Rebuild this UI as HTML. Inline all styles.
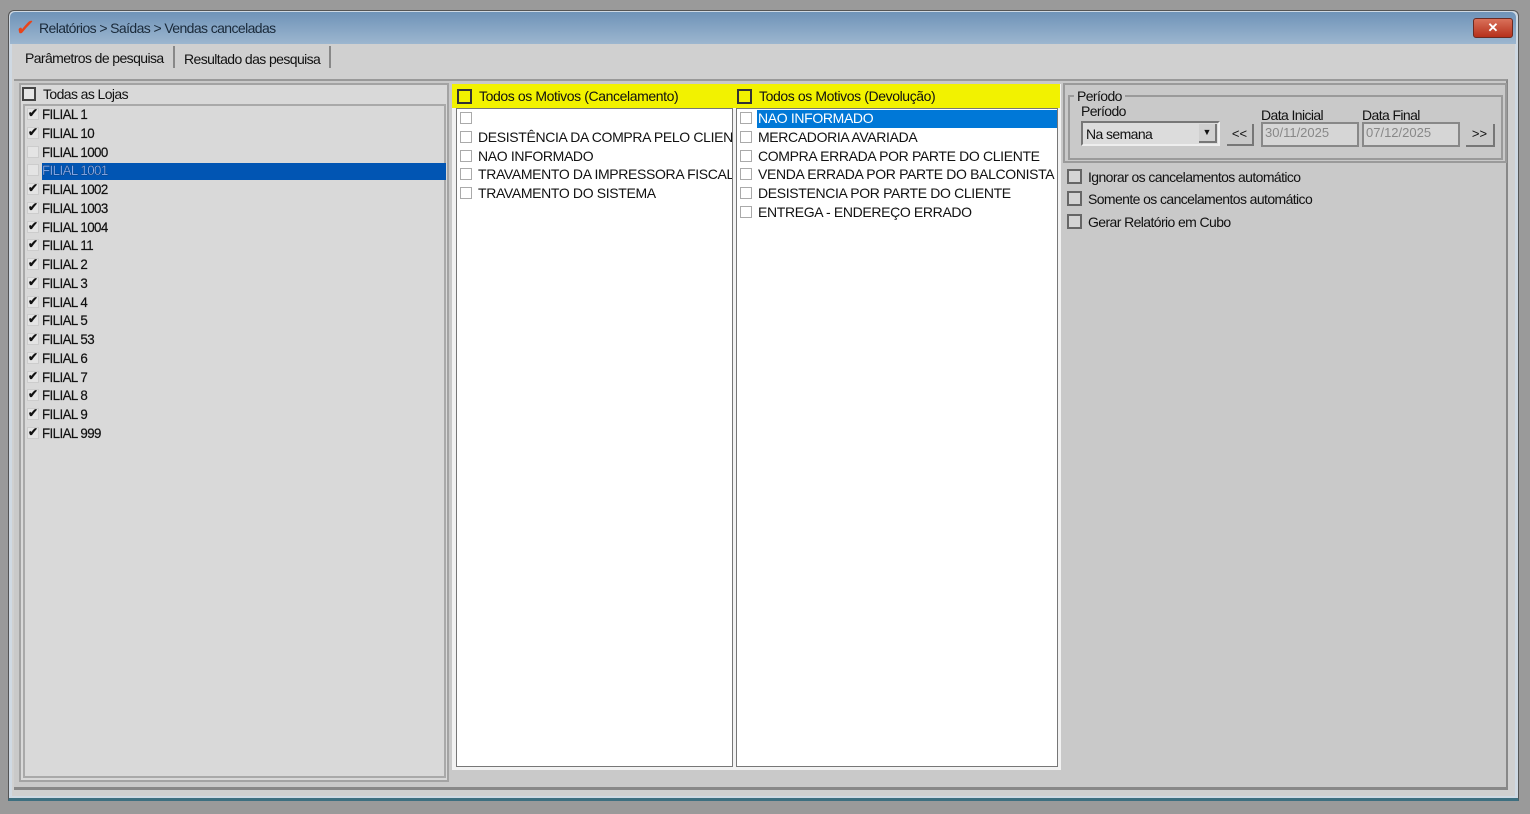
<!DOCTYPE html>
<html><head><meta charset="utf-8"><style>
*{margin:0;padding:0;box-sizing:border-box}
body{width:1530px;height:814px;background:#9a9a9a;position:relative;overflow:hidden;font-family:"Liberation Sans",sans-serif;color:#111}
.a{position:absolute}
.win{left:8px;top:10px;width:1511px;height:791px;background:#cfd9e3;border:1px solid #555;border-bottom:3px solid #3d6f80;border-radius:6px 6px 0 0}
.title{left:10px;top:12px;width:1506px;height:32px;background:linear-gradient(#6f93b8,#9cb6cf);border-radius:5px 5px 0 0}
.cb{position:absolute;width:12px;height:12px;border:1px solid #888;background:#eee}
.ck::after{content:"✔";position:absolute;left:0;top:-3px;font-size:12px;color:#111;font-weight:bold}
.li{position:absolute;left:42px;font-size:14px;letter-spacing:-0.6px;transform:scaleX(.95);transform-origin:left;-webkit-text-stroke:0.2px #111}
.mi{position:absolute;font-size:14px;letter-spacing:-0.35px}
.sm{font-size:14px;letter-spacing:-0.6px}
</style></head><body>
<div class="a win"></div>
<div class="a title"></div>
<div class="a" style="left:16px;top:15px;font-size:22px;color:#e8441a;font-weight:bold;transform:skewX(-10deg)">✓</div>
<div class="a sm" style="left:39px;top:20px;font-size:14px;color:#1a2a3a">Relatórios &gt; Saídas &gt; Vendas canceladas</div>
<div class="a" style="left:1473px;top:18px;width:40px;height:20px;background:linear-gradient(#d9715a,#b6301b);border:1px solid #6b2a22;border-radius:3px;color:#fff;font-size:13px;text-align:center;line-height:18px;font-weight:bold">✕</div>
<div class="a" style="left:12px;top:44px;width:1503px;height:752px;background:#d0d0d0"></div>
<div class="a sm" style="left:25px;top:50px">Parâmetros de pesquisa</div>
<div class="a" style="left:173px;top:46px;width:2px;height:22px;background:#888"></div>
<div class="a sm" style="left:184px;top:51px">Resultado das pesquisa</div>
<div class="a" style="left:329px;top:46px;width:2px;height:22px;background:#888"></div>
<div class="a" style="left:14px;top:79px;width:1494px;height:711px;background:#c9c9c9;border-top:2px solid #999;border-bottom:3px solid #888;border-right:2px solid #888"></div>
<div class="a" style="left:19px;top:83px;width:430px;height:699px;background:#d9d9d9;border:2px solid #a3a3a3"></div>
<div class="cb" style="left:22px;top:87px;width:14px;height:14px;border:2px solid #444;background:#e6e6e6"></div>
<div class="a sm" style="left:43px;top:86px">Todas as Lojas</div>
<div class="a" style="left:23px;top:104px;width:423px;height:674px;border:2px solid #a9a9a9"></div>
<div class="a" style="left:42px;top:163px;width:404px;height:17px;background:#0155b3"></div>
<div id="L"></div>
<div class="a" style="left:452px;top:84px;width:609px;height:686px;background:#f2f2f2"></div>
<div class="a" style="left:452px;top:84px;width:608px;height:24px;background:#f2f200"></div>
<div class="cb" style="left:457px;top:89px;width:15px;height:15px;border:2px solid #333;background:#f2f200"></div>
<div class="a" style="left:479px;top:88px;font-size:14px;letter-spacing:-0.4px">Todos os Motivos (Cancelamento)</div>
<div class="cb" style="left:737px;top:89px;width:15px;height:15px;border:2px solid #333;background:#f2f200"></div>
<div class="a" style="left:759px;top:88px;font-size:14px;letter-spacing:-0.4px">Todos os Motivos (Devolução)</div>
<div class="a" style="left:456px;top:108px;width:277px;height:659px;background:#fff;border:1px solid #777;overflow:hidden" id="M1"></div>
<div class="a" style="left:736px;top:108px;width:322px;height:659px;background:#fff;border:1px solid #777;overflow:hidden" id="M2"></div>
<div class="a" style="left:1063px;top:83px;width:444px;height:80px;border:2px solid #9a9a9a"></div>
<div class="a" style="left:1068px;top:95px;width:435px;height:65px;border:2px solid #9a9a9a"></div>
<div class="a sm" style="left:1074px;top:88px;background:#c9c9c9;padding:0 3px">Período</div>
<div class="a sm" style="left:1081px;top:103px">Período</div>
<div class="a" style="left:1081px;top:121px;width:139px;height:25px;border:2px solid #777;border-right-color:#eee;border-bottom-color:#eee;background:#dcdcdc"></div>
<div class="a sm" style="left:1086px;top:126px">Na semana</div>
<div class="a" style="left:1199px;top:124px;width:18px;height:19px;background:#d0d0d0;border-right:2px solid #777;border-bottom:2px solid #777;font-size:9px;text-align:center;line-height:17px">▼</div>
<div class="a" style="left:1227px;top:124px;width:27px;height:22px;border-right:2px solid #777;border-bottom:2px solid #777;font-size:13px;text-align:center;line-height:20px">&lt;&lt;</div>
<div class="a sm" style="left:1261px;top:107px">Data Inicial</div>
<div class="a" style="left:1261px;top:122px;width:98px;height:25px;border:2px solid #888;background:#d6d6d6;font-size:13px;color:#888;padding:1px 2px">30/11/2025</div>
<div class="a sm" style="left:1362px;top:107px">Data Final</div>
<div class="a" style="left:1362px;top:122px;width:98px;height:25px;border:2px solid #888;background:#d6d6d6;font-size:13px;color:#888;padding:1px 2px">07/12/2025</div>
<div class="a" style="left:1466px;top:124px;width:29px;height:23px;border-right:2px solid #777;border-bottom:2px solid #777;font-size:13px;text-align:center;line-height:20px">&gt;&gt;</div>
<div class="cb" style="left:1067px;top:169px;width:15px;height:15px;border:2px solid #666;background:#d4d4d4"></div>
<div class="a sm" style="left:1088px;top:169px">Ignorar os cancelamentos automático</div>
<div class="cb" style="left:1067px;top:191px;width:15px;height:15px;border:2px solid #666;background:#d4d4d4"></div>
<div class="a sm" style="left:1088px;top:191px">Somente os cancelamentos automático</div>
<div class="cb" style="left:1067px;top:214px;width:15px;height:15px;border:2px solid #666;background:#d4d4d4"></div>
<div class="a sm" style="left:1088px;top:214px">Gerar Relatório em Cubo</div>
<script>
var names=["FILIAL 1","FILIAL 10","FILIAL 1000","FILIAL 1001","FILIAL 1002","FILIAL 1003","FILIAL 1004","FILIAL 11","FILIAL 2","FILIAL 3","FILIAL 4","FILIAL 5","FILIAL 53","FILIAL 6","FILIAL 7","FILIAL 8","FILIAL 9","FILIAL 999"];
var h="";names.forEach(function(n,i){var y=106+i*18.75;var c=(i==2||i==3)?"":" ck";
h+='<div class="cb'+c+'" style="left:27px;top:'+(y+2)+'px;border-color:#ccc;background:#e4e4e4"></div>';
h+='<div class="li" style="top:'+y+'px;color:'+(i==3?'#8fb7ff':'#111')+'">'+n+'</div>';});
document.getElementById("L").outerHTML=h;
function m(id,arr,sel){var s="";arr.forEach(function(n,i){var y=1+i*18.8;
s+='<div class="cb" style="left:3px;top:'+(y+2)+'px;border-color:#aaa;background:#fff"></div>';
if(i===sel)s+='<div class="a" style="left:20px;top:'+(y)+'px;width:300px;height:18px;background:#0078d7"></div>';
s+='<div class="mi" style="left:21px;top:'+y+'px;white-space:nowrap;color:'+(i===sel?'#fff':'#111')+'">'+n+'</div>';});
document.getElementById(id).innerHTML=s;}
m("M1",["","DESISTÊNCIA DA COMPRA PELO CLIENTE","NAO INFORMADO","TRAVAMENTO DA IMPRESSORA FISCAL","TRAVAMENTO DO SISTEMA"],-1);
m("M2",["NAO INFORMADO","MERCADORIA AVARIADA","COMPRA ERRADA POR PARTE DO CLIENTE","VENDA ERRADA POR PARTE DO BALCONISTA","DESISTENCIA POR PARTE DO CLIENTE","ENTREGA - ENDEREÇO ERRADO"],0);
</script>
</body></html>
